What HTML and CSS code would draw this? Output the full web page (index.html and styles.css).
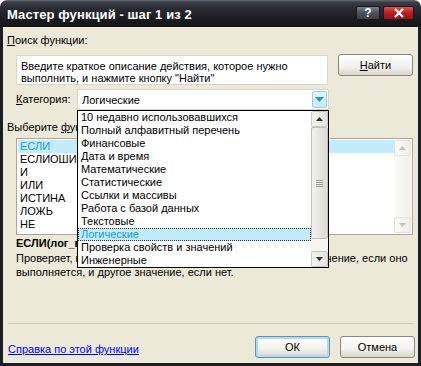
FILE: index.html
```html
<!DOCTYPE html>
<html lang="ru">
<head>
  <meta charset="UTF-8">
  <title>Мастер функций - шаг 1 из 2</title>
  <link rel="stylesheet" href="styles.css">
</head>
<body>
  <div class="window">
    <div class="titlebar">
      <span class="title">Мастер функций - шаг 1 из 2</span>
      <div class="caption-btns">
        <span class="cbtn help">?</span>
        <span class="cbtn close">
          <svg width="12" height="10" viewBox="0 0 12 10"><path d="M2 1 L10 9 M10 1 L2 9" stroke="#fff" stroke-width="2.2"/></svg>
        </span>
      </div>
    </div>

    <div class="client">
      <div class="label search-label"><u>П</u>оиск функции:</div>
      <div class="search-row">
        <div class="search-box">Введите краткое описание действия, которое нужно<br>выполнить, и нажмите кнопку "Найти"</div>
        <span class="btn find-btn"><u>Н</u>айти</span>
      </div>

      <div class="category-row">
        <span class="label cat-label"><u>К</u>атегория:</span>
        <div class="combo">
          <span class="combo-text">Логические</span>
          <span class="combo-btn">
            <svg width="9" height="5" viewBox="0 0 9 5"><path d="M0 0 H9 L4.5 5 Z" fill="#1f96dc"/></svg>
          </span>
          <!-- open list of the combo -->
          <div class="dropdown">
            <ul class="drop-items">
              <li>10 недавно использовавшихся</li>
              <li>Полный алфавитный перечень</li>
              <li>Финансовые</li>
              <li>Дата и время</li>
              <li>Математические</li>
              <li>Статистические</li>
              <li>Ссылки и массивы</li>
              <li>Работа с базой данных</li>
              <li>Текстовые</li>
              <li class="selected">Логические</li>
              <li>Проверка свойств и значений</li>
              <li>Инженерные</li>
            </ul>
            <div class="vscroll">
              <span class="sbtn">
                <svg width="7" height="4" viewBox="0 0 7 4"><path d="M0 4 H7 L3.5 0 Z" fill="#333"/></svg>
              </span>
              <span class="thumb">
                <span class="grip"></span><span class="grip"></span><span class="grip"></span><span class="grip"></span>
              </span>
              <span class="track"></span>
              <span class="sbtn">
                <svg width="7" height="4" viewBox="0 0 7 4"><path d="M0 0 H7 L3.5 4 Z" fill="#333"/></svg>
              </span>
            </div>
          </div>
        </div>
      </div>

      <div class="label pick-label">Выберите <u>ф</u>ункцию:</div>
      <div class="func-list">
        <ul class="func-items">
          <li class="selected">ЕСЛИ</li>
          <li>ЕСЛИОШИБКА</li>
          <li>И</li>
          <li>ИЛИ</li>
          <li>ИСТИНА</li>
          <li>ЛОЖЬ</li>
          <li>НЕ</li>
        </ul>
        <div class="vscroll disabled">
          <span class="sbtn">
            <svg width="7" height="4" viewBox="0 0 7 4"><path d="M0 4 H7 L3.5 0 Z" fill="#c5c2b2"/></svg>
          </span>
          <span class="track"></span>
          <span class="sbtn">
            <svg width="7" height="4" viewBox="0 0 7 4"><path d="M0 0 H7 L3.5 4 Z" fill="#c5c2b2"/></svg>
          </span>
        </div>
      </div>

      <div class="sig">ЕСЛИ(лог_выражение;знач_истина;знач_ложь)</div>
      <div class="desc">Проверяет, выполняется ли условие, и возвращает одно значение, если оно<br>выполняется, и другое значение, если нет.</div>

      <div class="sep"></div>

      <div class="footer">
        <a class="help-link" href="#">Справка по этой функции</a>
        <div class="footer-btns">
          <span class="btn default">ОК</span>
          <span class="btn">Отмена</span>
        </div>
      </div>
    </div>
  </div>
</body>
</html>
```

FILE: styles.css
```css
* {
  box-sizing: border-box;
}

body {
  margin: 0;
  background: #ffffff;
  font-family: "Liberation Sans", Arial, sans-serif;
  font-size: 11px;
  color: #000;
}

.window {
  width: 421px;
  height: 366px;
  display: flex;
  flex-direction: column;
}

/* caption */
.titlebar {
  height: 27px;
  flex: none;
  display: flex;
  align-items: center;
  justify-content: space-between;
  padding: 0 7px 0 7px;
  border-radius: 7px 7px 0 0;
  background: linear-gradient(#6a6e78 0, #3c3f47 2px, #2a2c33 8px, #1a1b20 20px, #131317 27px);
}

.title {
  color: #fff;
  font-weight: bold;
  font-size: 13px;
  letter-spacing: 0.1px;
  padding-top: 1px;
}

.caption-btns {
  display: flex;
  gap: 3px;
  margin-top: -2px;
}

.cbtn {
  height: 14px;
  display: flex;
  align-items: center;
  justify-content: center;
  border: 1px solid #1a1b1f;
  border-radius: 2px;
  color: #fff;
  font-weight: bold;
  font-size: 12px;
}

.help {
  width: 24px;
  background: linear-gradient(#7a7d85, #4d5058 50%, #3d4047);
}

.close {
  width: 31px;
  background: linear-gradient(#e0524e, #b81d1b 50%, #9c1412);
}

/* dialog body */
.client {
  flex: 1;
  background: #ece9d8;
  border: 3px solid #1d1e23;
  border-top: none;
  padding-top: 7px;
}

.label {
  line-height: 13px;
}

.search-label,
.pick-label {
  margin-left: 4px;
}

.search-row {
  display: flex;
  align-items: flex-start;
  margin: 7px 0 0 13px;
}

.search-box {
  width: 312px;
  height: 30px;
  margin-top: 1px;
  padding: 4px 0 0 4px;
  line-height: 12px;
  background: #fff;
  border: 1px solid #d9d6cb;
}

.btn {
  display: flex;
  align-items: center;
  justify-content: center;
  width: 75px;
  height: 22px;
  border: 1px solid #8a8880;
  border-radius: 3px;
  background: linear-gradient(#ffffff, #f3f2ec 60%, #d9d6c8);
}

.find-btn {
  margin-left: 10px;
}

.category-row {
  display: flex;
  align-items: center;
  margin: 4px 0 0 13px;
}

.cat-label {
  width: 61px;
}

.combo {
  position: relative;
  width: 252px;
  height: 21px;
  display: flex;
  align-items: center;
  justify-content: space-between;
  padding: 0 1px 0 4px;
  background: #fff;
  border: 1px solid #d9d6cb;
}

.combo-btn {
  width: 15px;
  height: 17px;
  display: flex;
  align-items: center;
  justify-content: center;
  border: 1px solid #94d2f2;
  border-radius: 2px;
  background: linear-gradient(#e8f6fd, #c9eafb);
}

.dropdown {
  position: absolute;
  top: 20px;
  left: -1px;
  width: 252px;
  height: 158px;
  display: flex;
  background: #fff;
  border: 1px solid #000;
  z-index: 2;
}

ul {
  margin: 0;
  padding: 0;
  list-style: none;
}

.drop-items {
  flex: 1;
}

.drop-items li,
.func-items li {
  height: 13px;
  line-height: 13px;
  padding-left: 3px;
  white-space: nowrap;
}

.drop-items li.selected {
  background: #c2ecfb;
  color: #1a9ad8;
  outline: 1px dotted #333;
  outline-offset: -1px;
}

.vscroll {
  width: 17px;
  display: flex;
  flex-direction: column;
  background: #f6f5f0;
}

.sbtn {
  height: 16px;
  flex: none;
  display: flex;
  align-items: center;
  justify-content: center;
  border: 1px solid #c9c8c2;
  border-radius: 2px;
  background: linear-gradient(90deg, #f4f4f1, #e2e2dc);
}

.thumb {
  height: 112px;
  flex: none;
  display: flex;
  flex-direction: column;
  align-items: center;
  justify-content: center;
  gap: 1px;
  border: 1px solid #c2c1bb;
  border-radius: 2px;
  background: linear-gradient(90deg, #f1f1ee, #dcdcd6);
}

.grip {
  width: 7px;
  height: 1px;
  background: #9a9a96;
}

.track {
  flex: 1;
}

.pick-label {
  margin-top: 11px;
}

.func-list {
  display: flex;
  width: 397px;
  height: 97px;
  margin: 4px 0 0 13px;
  padding: 1px;
  background: #fff;
  border: 1px solid #aca899;
}

.func-items {
  flex: 1;
}

.func-items li {
  padding-left: 2px;
}

.func-items li.selected {
  background: #c2ecfb;
  color: #1a9ad8;
}

.vscroll.disabled {
  background: linear-gradient(90deg, #fbfbf8, #f1f0ea);
}

.vscroll.disabled .sbtn {
  border-color: #e4e2d9;
  background: linear-gradient(90deg, #fbfbf9, #efeee8);
}

.sig {
  margin: 2px 0 0 13px;
  font-weight: bold;
  line-height: 13px;
}

.desc {
  margin: 1px 0 0 13px;
  line-height: 14px;
  white-space: nowrap;
}

.sep {
  height: 1px;
  margin: 44px 0 0 5px;
  width: 405px;
  background: #cfcbbb;
}

.footer {
  display: flex;
  align-items: center;
  justify-content: space-between;
  margin: 12px 0 0 5px;
  padding-right: 3px;
}

.help-link {
  color: #0000ff;
  margin-top: 4px;
}

.footer-btns {
  display: flex;
  gap: 10px;
}

.btn.default {
  border-color: #6c8fb0;
  box-shadow: inset 0 0 0 2px #a9dcf5;
}
```
